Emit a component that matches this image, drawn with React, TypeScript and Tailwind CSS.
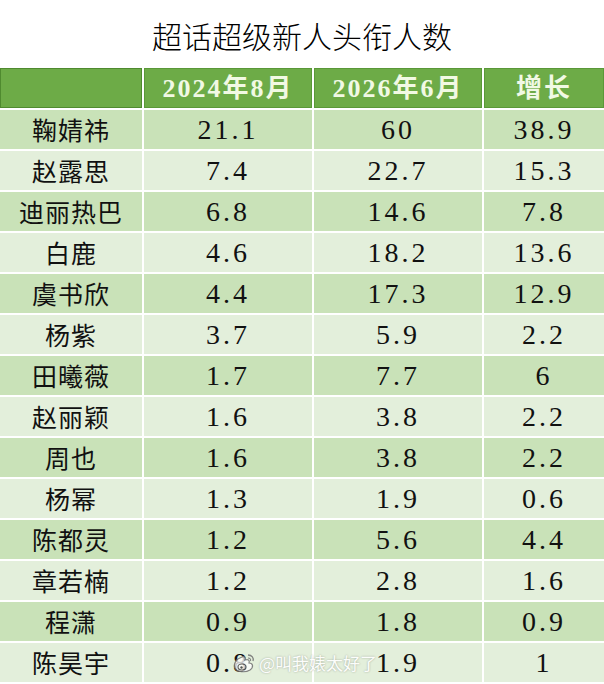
import React from "react";

const rows: [string, string, string, string][] = [
  ["鞠婧祎", "21.1", "60", "38.9"],
  ["赵露思", "7.4", "22.7", "15.3"],
  ["迪丽热巴", "6.8", "14.6", "7.8"],
  ["白鹿", "4.6", "18.2", "13.6"],
  ["虞书欣", "4.4", "17.3", "12.9"],
  ["杨紫", "3.7", "5.9", "2.2"],
  ["田曦薇", "1.7", "7.7", "6"],
  ["赵丽颖", "1.6", "3.8", "2.2"],
  ["周也", "1.6", "3.8", "2.2"],
  ["杨幂", "1.3", "1.9", "0.6"],
  ["陈都灵", "1.2", "5.6", "4.4"],
  ["章若楠", "1.2", "2.8", "1.6"],
  ["程潇", "0.9", "1.8", "0.9"],
  ["陈昊宇", "0.8", "1.9", "1"],
];

function NameCell({ name, odd }: { name: string; odd: boolean }) {
  return (
    <div
      className={
        odd
          ? "h-[39px] bg-[#c9e2b8] flex items-center justify-center text-[25px] text-[#111] tracking-[1px] font-['Noto_Sans_CJK_SC',sans-serif]"
          : "h-[39px] bg-[#e3efdb] flex items-center justify-center text-[25px] text-[#111] tracking-[1px] font-['Noto_Sans_CJK_SC',sans-serif]"
      }
    >
      {name}
    </div>
  );
}

function NumCell({ value, odd }: { value: string; odd: boolean }) {
  return (
    <div
      className={
        odd
          ? "h-[39px] bg-[#c9e2b8] flex items-center justify-center text-[28px] text-[#111] tracking-[3px] font-['Liberation_Serif',serif]"
          : "h-[39px] bg-[#e3efdb] flex items-center justify-center text-[28px] text-[#111] tracking-[3px] font-['Liberation_Serif',serif]"
      }
    >
      {value}
    </div>
  );
}

export default function App() {
  return (
    <div className="relative w-[604px] h-[684px] overflow-hidden bg-white">
      <div className="h-[68px] pt-[2px] flex items-center justify-center text-[30px] font-light text-black font-['Noto_Sans_CJK_SC',sans-serif]">
        超话超级新人头衔人数
      </div>
      <div className="grid grid-cols-[142px_168px_168px_1fr] gap-[2px] bg-white">
        <div className="h-[40px] bg-[#6dab47] border border-[#4f8a2f]" />
        {["2024年8月", "2026年6月", "增长"].map((h) => (
          <div
            key={h}
            className="h-[40px] bg-[#6dab47] border border-[#5a9838] flex items-center justify-center text-[26px] font-bold text-[#f1f9e4] tracking-[2px] font-['Liberation_Serif','Noto_Sans_CJK_SC',serif]"
          >
            {h}
          </div>
        ))}
        {rows.map((r, i) => (
          <React.Fragment key={r[0]}>
            <NameCell name={r[0]} odd={i % 2 === 0} />
            <NumCell value={r[1]} odd={i % 2 === 0} />
            <NumCell value={r[2]} odd={i % 2 === 0} />
            <NumCell value={r[3]} odd={i % 2 === 0} />
          </React.Fragment>
        ))}
      </div>
      <div className="absolute left-[232px] top-[650px] flex items-center gap-[3px] opacity-90">
        <svg width="24" height="22" viewBox="0 0 24 22">
          <path
            d="M10 5 C4 7 1 12 3 16 C5 20 13 21 18 18 C22 15 21 11 17 11 C18 8 16 7 13 8 C14 5 12 4 10 5 Z"
            fill="rgba(255,255,255,0.85)"
            stroke="#777"
            strokeWidth="1.2"
          />
          <ellipse cx="10" cy="15" rx="4" ry="3" fill="none" stroke="#555" strokeWidth="1.2" />
          <circle cx="9.5" cy="15.5" r="1.2" fill="#444" />
          <path d="M16 3 C20 3 22 6 21 9" fill="none" stroke="#777" strokeWidth="1.3" />
          <path d="M16 6 C18 6 19 7 18.5 9" fill="none" stroke="#777" strokeWidth="1.1" />
        </svg>
        <span className="text-[17px] text-white font-['Noto_Sans_CJK_SC',sans-serif] [text-shadow:0_0_2px_rgba(0,0,0,0.35)]">
          @叫我婊太好了
        </span>
      </div>
    </div>
  );
}
